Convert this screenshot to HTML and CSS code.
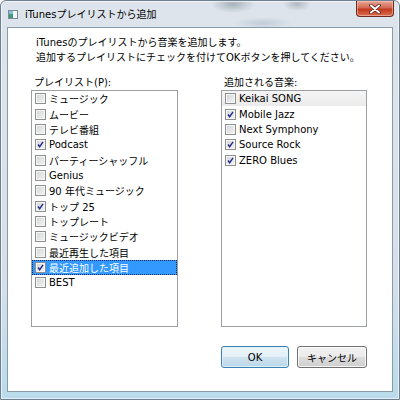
FILE: index.html
```html
<!DOCTYPE html>
<html lang="ja">
<head>
  <meta charset="UTF-8">
  <title>iTunesプレイリストから追加</title>
  <link rel="stylesheet" href="styles.css">
</head>
<body>
  <div class="window">
    <div class="titlebar">
      <svg class="app-icon" width="10" height="9" viewBox="0 0 10 9">
        <rect x="0.5" y="0.5" width="9" height="8" fill="#f4f6f8" stroke="#7c8a96"/>
        <rect x="1" y="1" width="4" height="7" fill="#3f9a7a"/>
        <rect x="1" y="1" width="4" height="3" fill="#7cc4d8"/>
      </svg>
      <span class="title">iTunesプレイリストから追加</span>
      <div class="close-btn">
        <svg width="12" height="10" viewBox="0 0 12 10">
          <path d="M2 1.5 L10 8.5 M10 1.5 L2 8.5" stroke="#5a2018" stroke-width="3.6" stroke-linecap="round"/>
          <path d="M2 1.5 L10 8.5 M10 1.5 L2 8.5" stroke="#ffffff" stroke-width="2" stroke-linecap="round"/>
        </svg>
      </div>
    </div>

    <div class="client">
      <p class="intro">iTunesのプレイリストから音楽を追加します。<br>追加するプレイリストにチェックを付けてOKボタンを押してください。</p>

      <div class="columns">
        <div class="column">
          <div class="list-label">プレイリスト(P):</div>
          <ul class="listbox">
            <li class="item"><span class="check"></span>ミュージック</li>
            <li class="item"><span class="check"></span>ムービー</li>
            <li class="item"><span class="check"></span>テレビ番組</li>
            <li class="item"><span class="check checked"><svg viewBox="0 0 11 11"><path d="M2.5 5.5 L4.5 8.2 L8.6 2.4"/></svg></span>Podcast</li>
            <li class="item"><span class="check"></span>パーティーシャッフル</li>
            <li class="item"><span class="check"></span>Genius</li>
            <li class="item"><span class="check"></span>90 年代ミュージック</li>
            <li class="item"><span class="check checked"><svg viewBox="0 0 11 11"><path d="M2.5 5.5 L4.5 8.2 L8.6 2.4"/></svg></span>トップ 25</li>
            <li class="item"><span class="check"></span>トップレート</li>
            <li class="item"><span class="check"></span>ミュージックビデオ</li>
            <li class="item"><span class="check"></span>最近再生した項目</li>
            <li class="item selected"><span class="check checked"><svg viewBox="0 0 11 11"><path d="M2.5 5.5 L4.5 8.2 L8.6 2.4"/></svg></span>最近追加した項目</li>
            <li class="item"><span class="check"></span>BEST</li>
          </ul>
        </div>

        <div class="column">
          <div class="list-label">追加される音楽:</div>
          <ul class="listbox">
            <li class="item hover"><span class="check"></span>Keikai SONG</li>
            <li class="item"><span class="check checked"><svg viewBox="0 0 11 11"><path d="M2.5 5.5 L4.5 8.2 L8.6 2.4"/></svg></span>Mobile Jazz</li>
            <li class="item"><span class="check"></span>Next Symphony</li>
            <li class="item"><span class="check checked"><svg viewBox="0 0 11 11"><path d="M2.5 5.5 L4.5 8.2 L8.6 2.4"/></svg></span>Source Rock</li>
            <li class="item"><span class="check checked"><svg viewBox="0 0 11 11"><path d="M2.5 5.5 L4.5 8.2 L8.6 2.4"/></svg></span>ZERO Blues</li>
          </ul>
        </div>
      </div>

      <div class="buttons">
        <button class="btn btn-default">OK</button>
        <button class="btn">キャンセル</button>
      </div>
    </div>
  </div>
</body>
</html>
```

FILE: styles.css
```css
body {
  margin: 0;
  padding: 0;
  font-family: 'DejaVu Sans', 'Noto Sans CJK JP', sans-serif;
  font-size: 10px;
  color: #000000;
}

.window {
  width: 400px;
  height: 400px;
  box-sizing: border-box;
  display: flex;
  flex-direction: column;
  border: 1px solid #6d7f91;
  border-radius: 6px 6px 0 0;
  background:
    radial-gradient(ellipse 22px 9px at 232px 3px, rgba(70, 85, 100, 0.35), transparent),
    radial-gradient(ellipse 14px 7px at 296px 3px, rgba(70, 85, 100, 0.3), transparent),
    radial-gradient(ellipse 30px 6px at 262px 22px, rgba(110, 135, 165, 0.25), transparent),
    linear-gradient(#dde4eb, #d6dfe8 70%, #b9dbeb);
  box-shadow: inset 0 0 0 1px rgba(255, 255, 255, 0.6);
  overflow: hidden;
}

.titlebar {
  height: 26px;
  flex-shrink: 0;
  display: flex;
  align-items: center;
  padding-left: 7px;
}

.app-icon {
  display: block;
  margin-right: 7px;
}

.title {
  font-size: 10px;
  line-height: 15px;
  color: #000000;
}

.close-btn {
  align-self: flex-start;
  margin-left: auto;
  margin-right: 5px;
  width: 38px;
  height: 16px;
  box-sizing: border-box;
  border: 1px solid #6e2b22;
  border-top: none;
  border-radius: 0 0 4px 4px;
  background: linear-gradient(#eaa697, #d26a53 45%, #c2381f 55%, #d9704f);
  box-shadow: inset 0 0 0 1px rgba(255, 210, 200, 0.5);
  display: flex;
  align-items: center;
  justify-content: center;
}

.client {
  flex: 1;
  margin: 0 6px 7px 6px;
  background-color: #ffffff;
  border: 1px solid #8b9aa8;
}

.intro {
  margin: 0;
  padding: 7px 0 0 28px;
  line-height: 15px;
}

.columns {
  display: grid;
  grid-template-columns: 147px 146px;
  column-gap: 43px;
  margin: 10px 0 0 23px;
}

.list-label {
  line-height: 15px;
  padding-left: 3px;
}

.listbox {
  list-style: none;
  margin: 0;
  padding: 0;
  height: 237px;
  box-sizing: border-box;
  border: 1px solid #9c9fa6;
}

.item {
  height: 15.35px;
  display: flex;
  align-items: center;
  gap: 3px;
  padding-left: 3px;
  white-space: nowrap;
}

.item.hover {
  background: linear-gradient(#f5f5f5, #ebebeb);
}

.item.selected {
  background-color: #3399ff;
  color: #ffffff;
  outline: 1px dotted #0b2a60;
  outline-offset: -1px;
}

.check {
  width: 11px;
  height: 11px;
  box-sizing: border-box;
  flex-shrink: 0;
  border: 1px solid #8e8f8f;
  background: linear-gradient(135deg, #d2d4d6, #f4f4f4);
  box-shadow: inset 0 0 0 1px #f6f6f6;
}

.check svg {
  display: block;
  width: 9px;
  height: 9px;
}

.check svg path {
  fill: none;
  stroke: #232b8c;
  stroke-width: 1.7;
}

.buttons {
  display: flex;
  justify-content: flex-end;
  gap: 8px;
  margin: 19px 25px 0 0;
}

.btn {
  height: 22px;
  width: 70px;
  padding: 0;
  font-family: 'DejaVu Sans', 'Noto Sans CJK JP', sans-serif;
  font-size: 10px;
  color: #000000;
  border: 1px solid #707070;
  border-radius: 3px;
  background: linear-gradient(#f2f2f2, #ebebeb 50%, #dddddd 50%, #cfcfcf);
  box-shadow: inset 0 0 0 1px rgba(255, 255, 255, 0.8);
}

.btn-default {
  width: 68px;
  border-color: #3c7fb1;
  background: linear-gradient(#eef6fb, #e3eff7 50%, #cfe3ef 50%, #bcd7e8);
  box-shadow: inset 0 0 0 1px rgba(220, 245, 255, 0.9);
}
```
